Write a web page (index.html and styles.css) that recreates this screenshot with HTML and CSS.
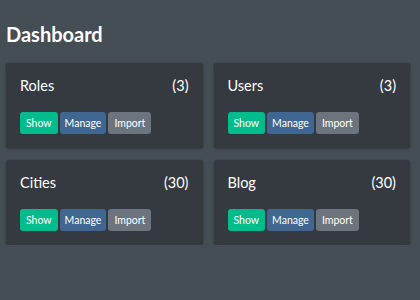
FILE: index.html
```html
<!DOCTYPE html>
<html>
<head>
<meta charset="utf-8">
<link rel="stylesheet" href="styles.css">
</head>
<body>
<div class="page">
  <h1 class="title">Dashboard</h1>
  <div class="grid">
    <div class="card">
      <div class="card-head"><span>Roles</span><span>(3)</span></div>
      <div class="actions"><span class="btn btn-show">Show</span><span class="btn btn-manage">Manage</span><span class="btn btn-import">Import</span></div>
    </div>
    <div class="card">
      <div class="card-head"><span>Users</span><span>(3)</span></div>
      <div class="actions"><span class="btn btn-show">Show</span><span class="btn btn-manage">Manage</span><span class="btn btn-import">Import</span></div>
    </div>
    <div class="card">
      <div class="card-head"><span>Cities</span><span>(30)</span></div>
      <div class="actions"><span class="btn btn-show">Show</span><span class="btn btn-manage">Manage</span><span class="btn btn-import">Import</span></div>
    </div>
    <div class="card">
      <div class="card-head"><span>Blog</span><span>(30)</span></div>
      <div class="actions"><span class="btn btn-show">Show</span><span class="btn btn-manage">Manage</span><span class="btn btn-import">Import</span></div>
    </div>
  </div>
</div>
</body>
</html>
```
FILE: styles.css
```css
html, body {
  margin: 0;
  padding: 0;
  background: #454d55;
  font-family: Lato, "Liberation Sans", sans-serif;
  color: #ffffff;
}
.page {
  padding: 0 10px 0 6px;
}
.title {
  margin: 0;
  padding-top: 22px;
  height: 41px;
  box-sizing: border-box;
  font-size: 20px;
  line-height: 24px;
  font-weight: 700;
}
.grid {
  display: grid;
  grid-template-columns: 1fr 1fr;
  column-gap: 11px;
  row-gap: 12px;
  margin-top: 22px;
}
.card {
  background: #343a40;
  border-radius: 3px;
  padding: 14px 14px 13px 14px;
  height: 85px;
  box-sizing: border-box;
  box-shadow: 0 0 1px rgba(0,0,0,.2), 0 1px 3px rgba(0,0,0,.25);
}
.card-head {
  display: flex;
  justify-content: space-between;
  font-size: 14.5px;
  line-height: 18px;
  height: 18px;
}
.actions {
  display: flex;
  gap: 2px;
  margin-top: 17px;
}
.btn {
  display: inline-block;
  font-size: 10.5px;
  line-height: 22px;
  height: 22px;
  padding: 0 6px;
  border-radius: 3px;
  color: #fff;
}
.btn-show { background: #00bc8c; }
.btn-manage { background: #3f6791; padding: 0 5px; }
.btn-import { background: #6c757d; }
```
